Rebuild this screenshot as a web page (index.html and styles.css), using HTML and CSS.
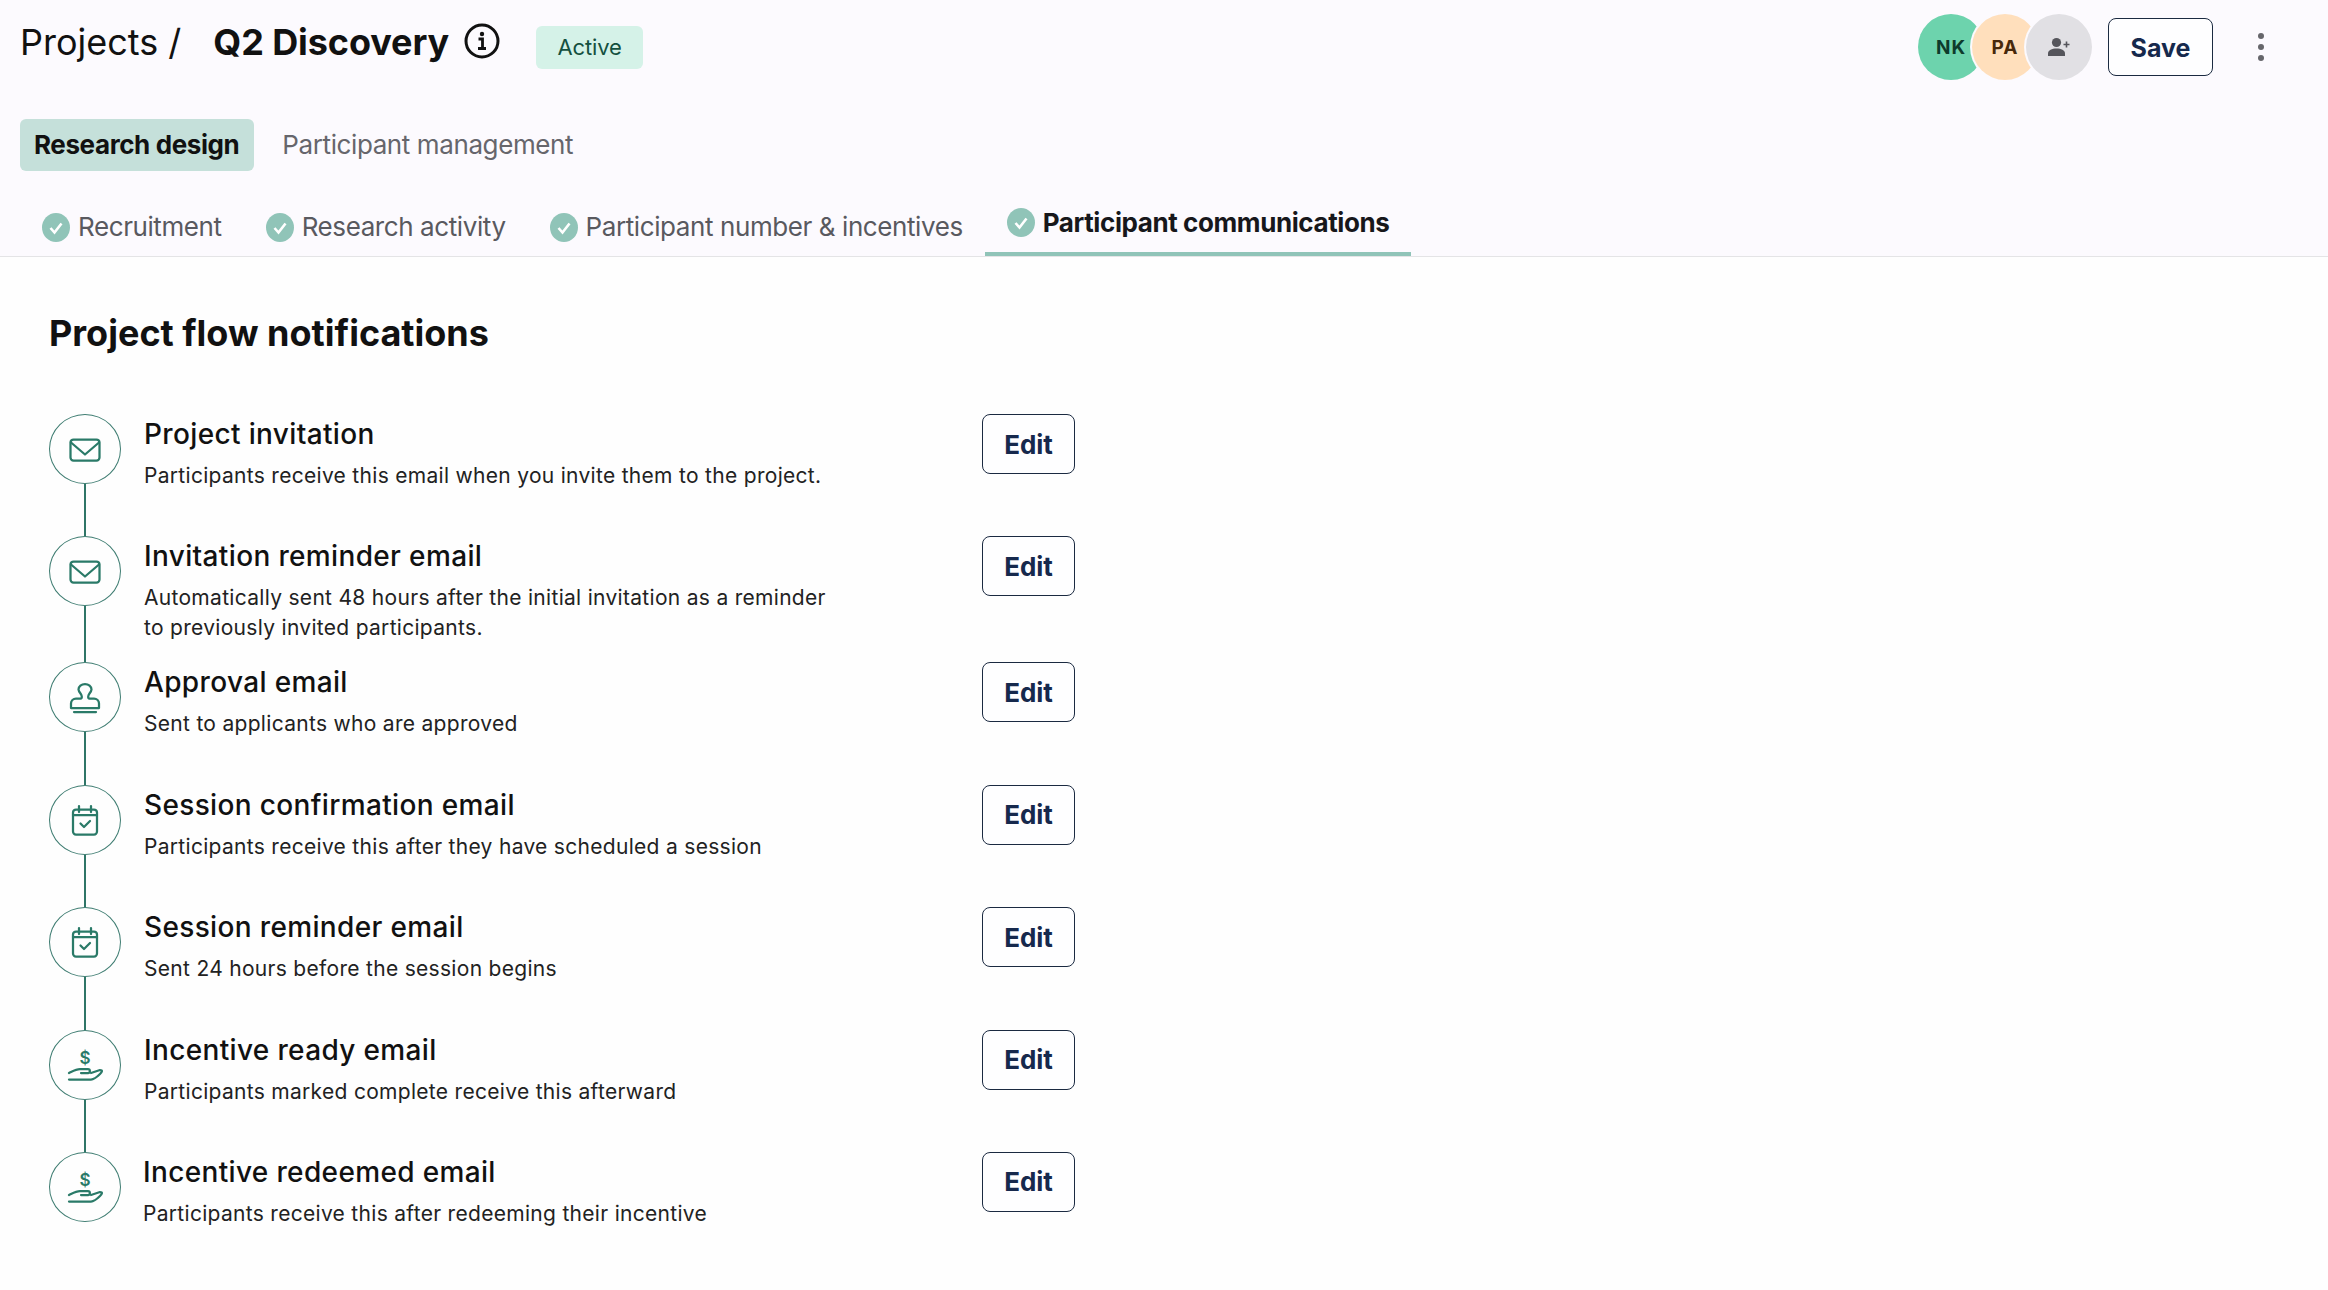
FILE: index.html
```html
<!DOCTYPE html>
<html lang="en">
<head>
<meta charset="utf-8">
<title>Q2 Discovery</title>
<link rel="stylesheet" href="styles.css">
</head>
<body>
<header class="head">
  <div class="title-row">
    <div class="title-left">
      <span class="crumb">Projects /</span>
      <h1 class="project">Q2 Discovery</h1>
      <svg class="info" viewBox="0 0 36 36" fill="none"><circle cx="18" cy="18" r="16" stroke="#111" stroke-width="3"/><circle cx="18" cy="11" r="2.2" fill="#111"/><path d="M14.5 16h4v9M14 25.5h8" stroke="#111" stroke-width="2.8"/></svg>
      <span class="tag">Active</span>
    </div>
    <div class="title-right">
      <div class="avatars">
        <span class="avatar avatar-nk">NK</span>
        <span class="avatar avatar-pa">PA</span>
        <span class="avatar avatar-add"><svg class="add-icon" viewBox="0 0 24 24"><circle cx="9.5" cy="7.5" r="4.6" fill="#55555b"/><path d="M1 21v-2.5C1 15 5 13.5 9.5 13.5S18 15 18 18.5V21z" fill="#55555b"/><path d="M19.5 6.5v6M16.5 9.5h6" stroke="#55555b" stroke-width="1.6"/></svg></span>
      </div>
      <button class="btn btn-save">Save</button>
      <div class="more"><i></i><i></i><i></i></div>
    </div>
  </div>
  <nav class="primary-tabs">
    <a class="ptab ptab-on">Research design</a>
    <a class="ptab">Participant management</a>
  </nav>
  <nav class="sub-tabs">
    <a class="stab"><svg class="check" viewBox="0 0 28 29"><ellipse cx="14" cy="14.5" rx="14" ry="14.5" fill="#90c4b8"/><path d="M8.5 15l4 4.5 7-9" stroke="#fff" stroke-width="2.6" fill="none"/></svg>Recruitment</a>
    <a class="stab"><svg class="check" viewBox="0 0 28 29"><ellipse cx="14" cy="14.5" rx="14" ry="14.5" fill="#90c4b8"/><path d="M8.5 15l4 4.5 7-9" stroke="#fff" stroke-width="2.6" fill="none"/></svg>Research activity</a>
    <a class="stab"><svg class="check" viewBox="0 0 28 29"><ellipse cx="14" cy="14.5" rx="14" ry="14.5" fill="#90c4b8"/><path d="M8.5 15l4 4.5 7-9" stroke="#fff" stroke-width="2.6" fill="none"/></svg>Participant number &amp; incentives</a>
    <a class="stab stab-on"><svg class="check" viewBox="0 0 28 29"><ellipse cx="14" cy="14.5" rx="14" ry="14.5" fill="#90c4b8"/><path d="M8.5 15l4 4.5 7-9" stroke="#fff" stroke-width="2.6" fill="none"/></svg>Participant communications</a>
  </nav>
</header>
<main class="main">
  <h2 class="heading">Project flow notifications</h2>
  <ol class="steps">
    <li class="step">
      <div class="rail"><span class="node"><svg class="ico" viewBox="0 0 36 36"><rect x="3.5" y="8.5" width="29" height="21" rx="3"/><path d="M4 11.5l14 12 14-12"/></svg></span><span class="line"></span></div>
      <div class="copy"><h3>Project invitation</h3><p>Participants receive this email when you invite them to the project.</p></div>
      <button class="btn btn-edit">Edit</button>
    </li>
    <li class="step">
      <div class="rail"><span class="node"><svg class="ico" viewBox="0 0 36 36"><rect x="3.5" y="8.5" width="29" height="21" rx="3"/><path d="M4 11.5l14 12 14-12"/></svg></span><span class="line"></span></div>
      <div class="copy"><h3>Invitation reminder email</h3><p>Automatically sent 48 hours after the initial invitation as a reminder to previously invited participants.</p></div>
      <button class="btn btn-edit">Edit</button>
    </li>
    <li class="step">
      <div class="rail"><span class="node"><svg class="ico" viewBox="0 0 36 36"><path d="M4 29v-4.5a5 5 0 0 1 5-5h4.5c2 0 1.5-3 0-5-1.500-2-2-3-2-4a6.500 5.500 0 0 1 13 0c0 1-.5 2-2 4-1.500 2-2 5 0 5H27a5 5 0 0 1 5 5V29z"/><path d="M7 33h22"/></svg></span><span class="line"></span></div>
      <div class="copy"><h3>Approval email</h3><p>Sent to applicants who are approved</p></div>
      <button class="btn btn-edit">Edit</button>
    </li>
    <li class="step">
      <div class="rail"><span class="node"><svg class="ico" viewBox="0 0 36 36"><rect x="6" y="7.5" width="24" height="25" rx="3"/><path d="M12 4v6M24 4v6M6 13h24M13.5 21.5l3.5 3.5 6-6"/></svg></span><span class="line"></span></div>
      <div class="copy"><h3>Session confirmation email</h3><p>Participants receive this after they have scheduled a session</p></div>
      <button class="btn btn-edit">Edit</button>
    </li>
    <li class="step">
      <div class="rail"><span class="node"><svg class="ico" viewBox="0 0 36 36"><rect x="6" y="7.5" width="24" height="25" rx="3"/><path d="M12 4v6M24 4v6M6 13h24M13.5 21.5l3.5 3.5 6-6"/></svg></span><span class="line"></span></div>
      <div class="copy"><h3>Session reminder email</h3><p>Sent 24 hours before the session begins</p></div>
      <button class="btn btn-edit">Edit</button>
    </li>
    <li class="step">
      <div class="rail"><span class="node"><svg class="ico" viewBox="0 0 36 36"><text class="dollar" x="18" y="17" text-anchor="middle">$</text><path d="M2 26c4-2 7-4 11-4h8c2.5 0 2.5 4 0 4h-7M24 26l9-3c3 0 2 2 0 4-3 3-6 5.5-9 5.5H2"/></svg></span><span class="line"></span></div>
      <div class="copy"><h3>Incentive ready email</h3><p>Participants marked complete receive this afterward</p></div>
      <button class="btn btn-edit">Edit</button>
    </li>
    <li class="step step-last">
      <div class="rail"><span class="node"><svg class="ico" viewBox="0 0 36 36"><text class="dollar" x="18" y="17" text-anchor="middle">$</text><path d="M2 26c4-2 7-4 11-4h8c2.5 0 2.5 4 0 4h-7M24 26l9-3c3 0 2 2 0 4-3 3-6 5.5-9 5.5H2"/></svg></span></div>
      <div class="copy"><h3>Incentive redeemed email</h3><p>Participants receive this after redeeming their incentive</p></div>
      <button class="btn btn-edit">Edit</button>
    </li>
  </ol>
</main>
</body>
</html>
```
FILE: styles.css
```css
* { box-sizing: border-box; }
html, body { margin: 0; padding: 0; }
body { background: #fefefe; font-family: Inter, "Liberation Sans", sans-serif; color: #111; width: 2328px; height: 1290px; overflow: hidden; }

.head { background: #fcfafe; border-bottom: 1px solid #e4e4e6; height: 257px; }
.title-row { display: flex; justify-content: space-between; padding: 14px 0 0 20px; height: 80px; }
.title-left { display: flex; align-items: flex-start; }
.crumb { margin-top: 1px; font-size: 36px; line-height: 54px; font-weight: 400; }
.project { margin: 1px 0 0 32px; font-size: 36px; line-height: 54px; font-weight: 700; letter-spacing: -0.1px; }
.info { width: 36px; height: 36px; margin: 9px 0 0 15px; }
.tag { margin: 12px 0 0 36px; width: 107px; height: 43px; border-radius: 6px; background: #d5f2e8; color: #14503f; font-size: 22px; line-height: 43px; text-align: center; letter-spacing: -0.1px; }
.title-right { display: flex; align-items: flex-start; }
.avatars { display: flex; }
.avatar { width: 66px; height: 66px; border-radius: 50%; display: flex; align-items: center; justify-content: center; font-size: 19px; font-weight: 700; letter-spacing: 1px; }
.avatar + .avatar { margin-left: -12px; box-shadow: 0 0 0 2px #fcfafe; }
.avatar-nk { background: #6dd3ad; color: #0d3b2c; }
.avatar-pa { background: #ffdfbc; color: #47280b; }
.avatar-add { background: #e1e0e4; }
.add-icon { width: 24px; height: 24px; }
.btn { background: #fefeff; border: 1.5px solid #1b2a41; border-radius: 8px; color: #16294d; font-family: inherit; font-weight: 700; padding: 0; }
.btn-save { width: 105px; height: 58px; margin: 4px 0 0 16px; padding-top: 1px; font-size: 25px; }
.more { display: flex; flex-direction: column; gap: 5px; margin: 19px 64px 0 45px; }
.more i { display: block; width: 6px; height: 6px; border-radius: 50%; background: #66666b; }

.primary-tabs { display: flex; margin: 39px 0 0 20px; gap: 14px; }
.ptab { height: 52px; line-height: 52px; padding: 0 15px 0 14px; border-radius: 6px; font-size: 26px; letter-spacing: -0.4px; color: #66666c; }
.ptab-on { background: #c5e0da; color: #111; font-weight: 700; }

.sub-tabs { display: flex; margin: 25px 0 0 20px; height: 60px; }
.stab { display: flex; align-items: center; gap: 8px; padding: 0 22px; height: 60px; font-size: 26px; letter-spacing: -0.41px; color: #59595f; }
.stab .check { margin-top: 2px; }
.stab-on { color: #17171b; font-weight: 700; border-bottom: 4px solid #90c4b8; padding-bottom: 4px; }
.stab-on .check { margin-top: 0; }
.check { width: 28px; height: 29px; flex: none; }

.main { padding: 51px 0 0 49px; }
.heading { margin: 0; font-size: 36px; line-height: 50px; font-weight: 700; }
.steps { list-style: none; margin: 56px 0 0; padding: 0; }
.step { display: flex; min-height: 122.4px; }
.rail { width: 72px; display: flex; flex-direction: column; align-items: center; flex: none; }
.node { width: 72px; height: 70px; border: 1.25px solid #3f7d72; border-radius: 50%; display: flex; align-items: center; justify-content: center; flex: none; }
.line { width: 1.5px; flex: 1; background: #2f7567; }
.ico { width: 36px; height: 36px; fill: none; stroke: #2a7a68; stroke-width: 2.25; stroke-linecap: round; stroke-linejoin: round; }
.dollar { font-family: Inter, sans-serif; font-size: 17px; font-weight: 600; fill: #2a7a68; stroke: none; }
.copy { width: 838px; margin-left: 23px; padding: 2px 0 19px; flex: none; }
.step-last .copy { width: 839px; margin-left: 22px; }
.copy h3 { margin: 0 0 9px; font-size: 28px; line-height: 36px; font-weight: 500; letter-spacing: 0.35px; color: #111; }
.copy p { margin: 0; max-width: 695px; font-size: 21px; line-height: 30px; letter-spacing: 0.3px; color: #222; }
.btn-edit { width: 93px; height: 60px; font-size: 26px; }
```
